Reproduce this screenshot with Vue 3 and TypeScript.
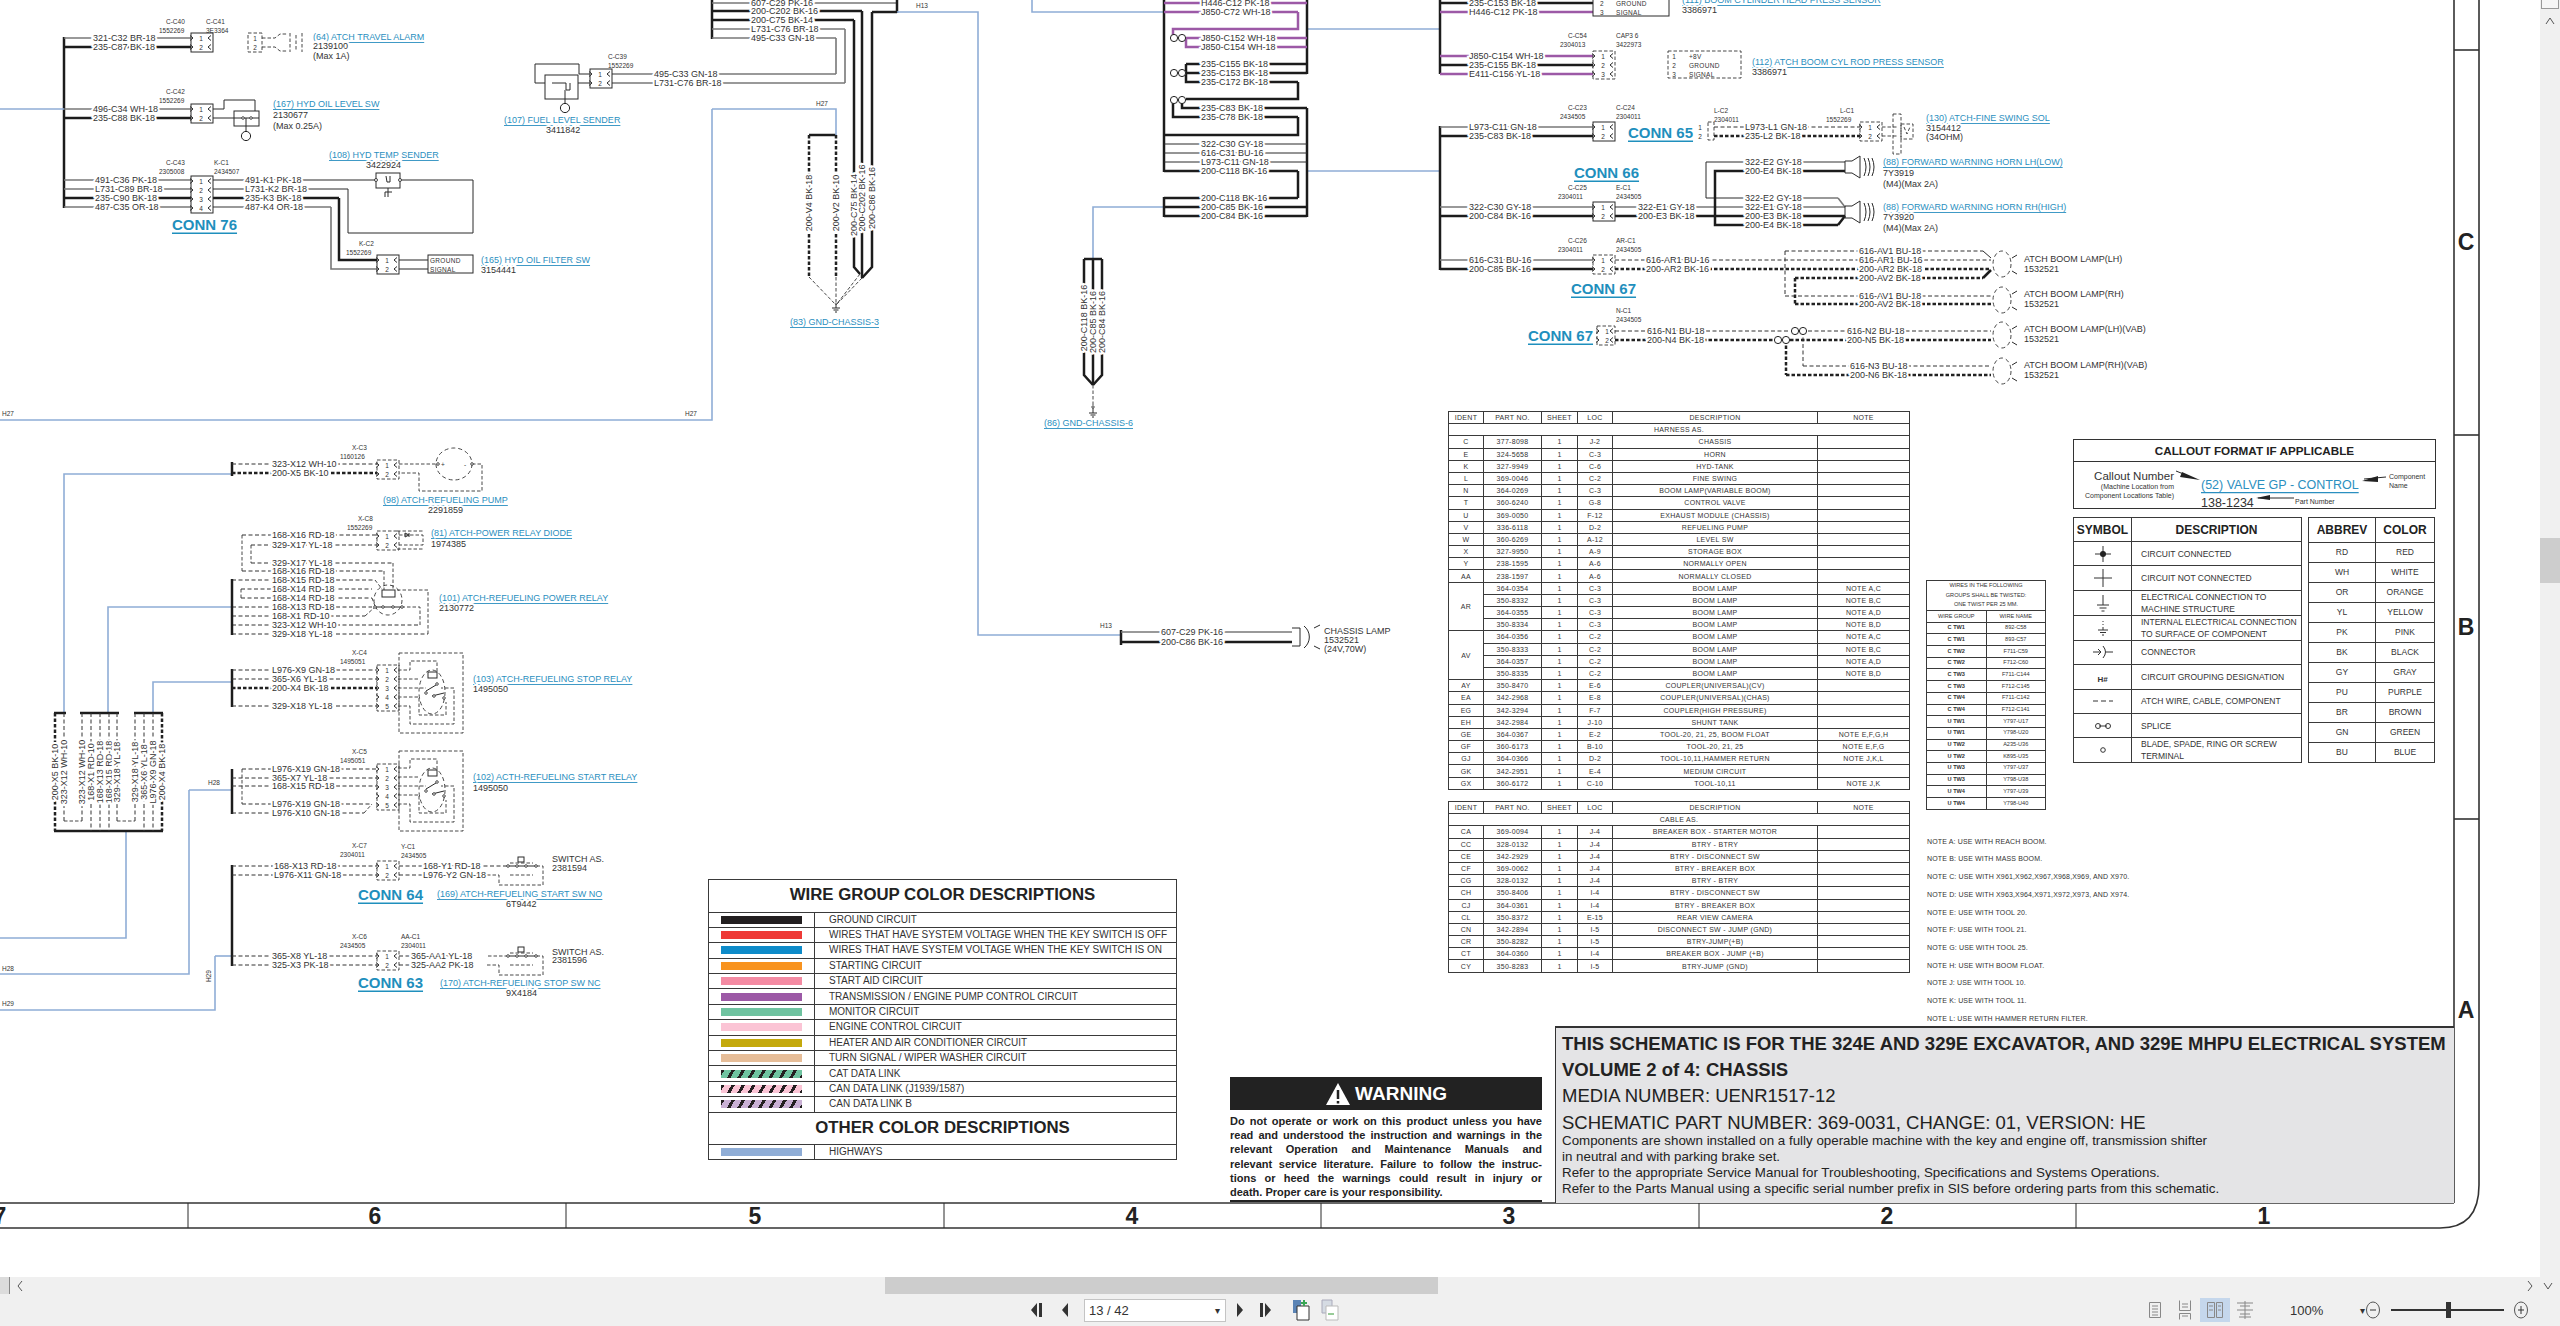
<script setup lang="ts">
// schematic sheet: wires, connectors and labels are plain data drawn into one svg
interface Txt { x: number; y: number; s: string; c: string; a: string; r: boolean }
const segs: { d: string; c: string }[] = [];
const boxes: { x: number; y: number; w: number; h: number; c: string }[] = [];
const rings: { x: number; y: number; rx: number; ry: number; c: string }[] = [];
const texts: Txt[] = [];

const P = (c: string, ...n: number[]) => {
	let d = "";
	for (let i = 0; i < n.length; i += 2) d += (i ? "L" : "M") + n[i] + " " + n[i + 1];
	segs.push({ d, c });
};
const R = (c: string, d: string) => segs.push({ d, c });
const T = (x: number, y: number, s: string, c = "wl", a = "start", r = false) => texts.push({ x, y, s, c, a, r });
const W = (c: string, y: number, x1: number, x2: number, s: string, lx: number) => {
	P(c, x1, y, x2, y);
	T(lx, y, s);
};
const B = (c: string, x: number, y: number, w: number, h: number) => boxes.push({ x, y, w, h, c });
const O = (c: string, x: number, y: number, rx: number, ry = rx) => rings.push({ x, y, rx, ry, c });
const CL = (xa: number, xb: number, y: number, a: string, b: string) => {
	T(xa, y, a, "sm");
	T(xb, y + 9, b, "sm");
};
const CN = (x: number, y0: number, n: number, dashed = false, w = 22) => {
	B(dashed ? "d" : "t", x, y0, w, 10 + 9 * (n - 1));
	for (let i = 0; i < n; i++) {
		const py = y0 + 5 + 9 * i;
		P("t", x - 1, py - 2.5, x + 2, py, x - 1, py + 2.5);
		P("t", x + w - 2, py - 2.5, x + w - 5, py, x + w - 2, py + 2.5);
		T(x + 10, py, String(i + 1), "pin", "middle");
	}
};
const GND = (x: number, y: number) => {
	P("t", x, y - 5, x, y);
	P("t", x - 4, y, x + 4, y);
	P("t", x - 2.5, y + 2, x + 2.5, y + 2);
	P("t", x - 1, y + 4, x + 1, y + 4);
};
const V = (x: number, y: number, s: string) => T(x, y, s, "wl", "middle", true);

// hyd tank area, top left
P("k", 64, 37, 64, 208);
P("h", 0, 109, 64, 109);
W("g", 38, 64, 191, "321-C32 BR-18", 93);
W("k", 47, 64, 191, "235-C87 BK-18", 93);
CN(191, 33, 2);
CL(166, 159, 21, "C-C40", "1552269");
T(206, 21, "C-C41", "sm");
T(206, 30, "3E3364", "sm");
B("d", 248, 33, 14, 19);
T(255, 38, "1", "pin", "middle");
T(255, 47, "2", "pin", "middle");
P("d", 262, 38, 275, 38, 280, 34, 288, 34);
P("d", 262, 47, 275, 47, 280, 51, 288, 51);
P("d", 290, 33, 290, 52);
P("d", 296, 35, 296, 50);
P("d", 302, 33, 302, 52);
T(313, 37, "(64) ATCH TRAVEL ALARM", "lk");
T(313, 46, "2139100");
T(313, 56, "(Max 1A)");

W("g", 109, 64, 191, "496-C34 WH-18", 93);
W("k", 118, 64, 191, "235-C88 BK-18", 93);
CN(191, 104, 2);
CL(166, 159, 91, "C-C42", "1552269");
P("t", 213, 109, 224, 109, 224, 100, 255, 100, 255, 111);
P("t", 213, 118, 234, 118);
B("t", 234, 111, 25, 15);
P("t", 234, 118, 259, 118);
P("t", 246, 118, 246, 131);
O("sw", 243, 118, 1.3);
O("sw", 251, 118, 1.3);
O("ring", 246, 136, 4.6);
T(273, 104, "(167) HYD OIL LEVEL SW", "lk");
T(273, 115, "2130677");
T(273, 126, "(Max 0.25A)");

W("g", 180, 64, 191, "491-C36 PK-18", 95);
W("g", 189, 64, 191, "L731-C89 BR-18", 95);
W("k", 198, 64, 191, "235-C90 BK-18", 95);
W("g", 207, 64, 191, "487-C35 OR-18", 95);
CN(191, 176, 4);
CL(166, 159, 162, "C-C43", "2305008");
CL(214, 214, 162, "K-C1", "2434507");
T(172, 224, "CONN 76", "cn");
W("t", 180, 213, 376, "491-K1 PK-18", 245);
P("t", 400, 180, 473, 180, 473, 233, 348, 233, 348, 189);
W("t", 189, 213, 348, "L731-K2 BR-18", 245);
W("k", 198, 213, 339, "235-K3 BK-18", 245);
P("k", 339, 198, 339, 260, 377, 260);
W("g", 207, 213, 331, "487-K4 OR-18", 245);
P("g", 331, 207, 331, 269, 377, 269);
B("t", 376, 173, 24, 15);
O("sw", 376, 180, 1.5);
O("sw", 400, 180, 1.5);
P("t", 386, 176, 387, 182, 390, 182, 390, 176);
P("t", 388, 188, 388, 197);
P("t", 385, 197, 385, 192, 392, 192);
T(329, 155, "(108) HYD TEMP SENDER", "lk");
T(366, 165, "3422924");
CN(377, 255, 2);
CL(359, 346, 243, "K-C2", "1552269");
P("g", 399, 260, 428, 260);
P("g", 399, 269, 428, 269);
B("t", 428, 255, 45, 18);
T(430, 260, "GROUND", "pn");
T(430, 269, "SIGNAL", "pn");
T(481, 260, "(165) HYD OIL FILTER SW", "lk");
T(481, 270, "3154441");

// fuel sender
CN(590, 69, 2);
CL(608, 608, 56, "C-C39", "1552269");
P("t", 590, 74, 579, 74, 579, 64, 535, 64, 535, 83, 545, 83);
P("t", 590, 83, 578, 83);
B("t", 545, 75, 33, 24);
P("t", 552, 83, 566, 83, 566, 90, 570, 90, 570, 83);
P("t", 565, 90, 565, 103);
O("ring", 565, 108, 4.6);
T(504, 120, "(107) FUEL LEVEL SENDER", "lk");
T(546, 130, "3411842");
W("g", 74, 612, 836, "495-C33 GN-18", 654);
W("g", 83, 612, 845, "L731-C76 BR-18", 654);
P("g", 836, 74, 836, 38);
P("g", 845, 83, 845, 29);

// top splice to chassis ground
P("k", 712, 0, 712, 39);
W("g", 3, 712, 897, "607-C29 PK-16", 751);
W("k", 11, 712, 862, "200-C202 BK-16", 751);
W("k", 20, 712, 854, "200-C75 BK-14", 751);
W("g", 29, 712, 845, "L731-C76 BR-18", 751);
W("g", 38, 712, 836, "495-C33 GN-18", 751);
P("k", 897, 0, 897, 13);
P("k", 872, 12, 897, 12);
P("k", 862, 11, 862, 278);
P("k", 872, 12, 872, 267, 862, 278);
P("k", 854, 20, 854, 267, 860, 274);
P("k", 809, 135, 836, 135);
P("kd", 809, 135, 809, 277);
P("kd", 836, 135, 836, 277);
P("d", 809, 277, 836, 305);
P("d", 836, 277, 836, 305);
P("d", 860, 274, 836, 305);
P("d", 862, 278, 836, 305);
GND(836, 308);
V(809, 203, "200-V4 BK-18");
V(836, 203, "200-V2 BK-10");
V(854, 205, "200-C75 BK-14");
V(862, 198, "200-C202 BK-16");
V(872, 198, "200-C86 BK-16");
T(790, 322, "(83) GND-CHASSIS-3", "lk");

// highways
P("h", 712, 109, 836, 109, 836, 135);
P("h", 712, 109, 712, 420, 0, 420);
T(816, 103, "H27", "sm");
T(685, 413, "H27", "sm");
T(2, 413, "H27", "sm");
P("h", 897, 12, 978, 12, 978, 635, 1120, 635);
T(916, 5, "H13", "sm");
T(1100, 625, "H13", "sm");
P("h", 1032, 0, 1032, 12, 1164, 12);
P("h", 1307, 29, 1439, 29);
P("h", 1307, 171, 1439, 171);
P("h", 1164, 207, 1093, 207, 1093, 259);

// chassis lamp
P("k", 1121, 630, 1121, 645);
W("g", 632, 1121, 1292, "607-C29 PK-16", 1161);
W("k", 642, 1121, 1292, "200-C86 BK-16", 1161);
P("t", 1292, 628, 1300, 628, 1300, 646, 1292, 646);
R("t", "M1304 626 A14 14 0 0 1 1304 648");
P("t", 1314, 628, 1320, 625);
P("t", 1314, 646, 1320, 649);
T(1324, 631, "CHASSIS LAMP");
T(1324, 640, "1532521");
T(1324, 649, "(24V,70W)");

// center bundle
P("k", 1164, 0, 1164, 172);
P("k", 1164, 197, 1164, 217);
P("k", 1307, 0, 1307, 74);
P("k", 1307, 108, 1307, 217);
W("p", 3, 1164, 1307, "H446-C12 PK-18", 1201);
W("p", 12, 1164, 1298, "J850-C72 WH-18", 1201);
P("p", 1298, 12, 1298, 29, 1173, 29, 1173, 38);
W("p", 38, 1186, 1307, "J850-C152 WH-18", 1201);
P("p", 1186, 38, 1186, 47, 1192, 47);
W("p", 47, 1192, 1307, "J850-C154 WH-18", 1201);
W("k", 64, 1186, 1307, "235-C155 BK-18", 1201);
W("k", 73, 1186, 1307, "235-C153 BK-18", 1201);
P("k", 1186, 64, 1186, 82, 1192, 82);
W("k", 82, 1192, 1298, "235-C172 BK-18", 1201);
P("k", 1298, 82, 1298, 99, 1186, 99);
P("k", 1182, 100, 1182, 108, 1192, 108);
P("k", 1173, 100, 1173, 117, 1192, 117);
W("k", 108, 1192, 1307, "235-C83 BK-18", 1201);
W("k", 117, 1192, 1298, "235-C78 BK-18", 1201);
P("k", 1298, 117, 1298, 135, 1164, 135);
W("t", 144, 1164, 1307, "322-C30 GY-18", 1201);
W("t", 153, 1164, 1307, "616-C31 BU-16", 1201);
W("t", 162, 1164, 1307, "L973-C11 GN-18", 1201);
W("k", 171, 1164, 1298, "200-C118 BK-16", 1201);
P("k", 1298, 171, 1298, 198);
W("k", 198, 1164, 1298, "200-C118 BK-16", 1201);
W("k", 207, 1164, 1307, "200-C85 BK-16", 1201);
W("k", 216, 1164, 1307, "200-C84 BK-16", 1201);
O("ring", 1174, 38, 3.6);
O("ring", 1182, 38, 3.6);
O("ring", 1174, 73, 3.6);
O("ring", 1182, 73, 3.6);
O("ring", 1174, 100, 3.6);
O("ring", 1182, 100, 3.6);

// lower ground bundle
P("k", 1084, 259, 1102, 259);
P("k", 1084, 259, 1084, 375, 1093, 385);
P("k", 1093, 259, 1093, 385);
P("k", 1102, 259, 1102, 375, 1093, 385);
P("d", 1093, 385, 1093, 408);
O("sw", 1093, 407, 1.2);
GND(1093, 413);
V(1084, 318, "200-C118 BK-16");
V(1093, 322, "200-C85 BK-16");
V(1102, 322, "200-C84 BK-16");
T(1044, 423, "(86) GND-CHASSIS-6", "lk");

// right group
P("k", 1440, 0, 1440, 74);
P("k", 1440, 126, 1440, 270);
W("k", 3, 1440, 1593, "235-C153 BK-18", 1469);
W("p", 12, 1440, 1593, "H446-C12 PK-18", 1469);
B("t", 1593, -20, 76, 36);
T(1616, 3, "GROUND", "pn");
T(1616, 12, "SIGNAL", "pn");
T(1600, 3, "2", "pin");
T(1600, 12, "3", "pin");
T(1682, 0, "(111) BOOM CYLINDER HEAD PRESS SENSOR", "lk");
T(1682, 10, "3386971");
W("p", 56, 1440, 1593, "J850-C154 WH-18", 1469);
W("k", 65, 1440, 1593, "235-C155 BK-18", 1469);
W("p", 74, 1440, 1593, "E411-C156 YL-18", 1469);
CN(1593, 51, 3, true);
CL(1568, 1560, 35, "C-C54", "2304013");
CL(1616, 1616, 35, "CAP3 6", "3422973");
B("d", 1668, 51, 73, 27);
["1", "2", "3"].forEach((n, i) => T(1674, 56 + 9 * i, n, "pin", "middle"));
T(1689, 56, "+8V", "pn");
T(1689, 65, "GROUND", "pn");
T(1689, 74, "SIGNAL", "pn");
T(1752, 62, "(112) ATCH BOOM CYL ROD PRESS SENSOR", "lk");
T(1752, 72, "3386971");

W("g", 127, 1440, 1593, "L973-C11 GN-18", 1469);
W("k", 136, 1440, 1593, "235-C83 BK-18", 1469);
CN(1593, 122, 2);
CL(1568, 1560, 107, "C-C23", "2434505");
CL(1616, 1616, 107, "C-C24", "2304011");
T(1628, 132, "CONN 65", "cn");
T(1700, 127, "1", "pin", "middle");
T(1700, 136, "2", "pin", "middle");
B("d", 1708, 122, 6, 18);
CL(1714, 1714, 110, "L-C2", "2304011");
W("gd", 127, 1714, 1860, "L973-L1 GN-18", 1745);
W("kd", 136, 1714, 1860, "235-L2 BK-18", 1745);
CN(1860, 122, 2, true);
CL(1840, 1826, 110, "L-C1", "1552269");
P("d", 1882, 127, 1897, 127);
P("d", 1882, 136, 1897, 136);
B("d", 1893, 114, 8, 40);
B("d", 1901, 124, 12, 15);
P("d", 1904, 127, 1907, 134, 1910, 127);
T(1926, 118, "(130) ATCH-FINE SWING SOL", "lk");
T(1926, 128, "3154412");
T(1926, 137, "(34OHM)");

T(1574, 172, "CONN 66", "cn");
W("g", 207, 1440, 1593, "322-C30 GY-18", 1469);
W("k", 216, 1440, 1593, "200-C84 BK-16", 1469);
CN(1593, 202, 2);
CL(1568, 1558, 187, "C-C25", "2304011");
CL(1616, 1616, 187, "E-C1", "2434505");
W("g", 207, 1615, 1745, "322-E1 GY-18", 1638);
W("k", 216, 1615, 1745, "200-E3 BK-18", 1638);
P("t", 1745, 162, 1706, 162, 1706, 198, 1745, 198);
P("k", 1745, 171, 1715, 171, 1715, 225, 1745, 225);
W("g", 162, 1745, 1845, "322-E2 GY-18", 1745);
W("k", 171, 1745, 1845, "200-E4 BK-18", 1745);
W("g", 198, 1745, 1838, "322-E2 GY-18", 1745);
P("g", 1838, 198, 1845, 207);
W("g", 207, 1745, 1845, "322-E1 GY-18", 1745);
W("k", 216, 1745, 1845, "200-E3 BK-18", 1745);
W("k", 225, 1745, 1838, "200-E4 BK-18", 1745);
P("k", 1838, 225, 1845, 216);
for (const y of [167, 212]) {
	P("t", 1845, y - 6, 1852, y - 6, 1860, y - 11, 1860, y + 11, 1852, y + 6, 1845, y + 6, 1845, y - 6);
	R("t", `M1864 ${y - 9} Q1868 ${y} 1864 ${y + 9}`);
	R("t", `M1868 ${y - 9} Q1872 ${y} 1868 ${y + 9}`);
	R("t", `M1872 ${y - 9} Q1876 ${y} 1872 ${y + 9}`);
}
T(1883, 162, "(88) FORWARD WARNING HORN LH(LOW)", "lk");
T(1883, 173, "7Y3919");
T(1883, 184, "(M4)(Max 2A)");
T(1883, 207, "(88) FORWARD WARNING HORN RH(HIGH)", "lk");
T(1883, 217, "7Y3920");
T(1883, 228, "(M4)(Max 2A)");

W("g", 260, 1440, 1593, "616-C31 BU-16", 1469);
W("k", 269, 1440, 1593, "200-C85 BK-16", 1469);
CN(1593, 255, 2, true);
CL(1568, 1558, 240, "C-C26", "2304011");
CL(1616, 1616, 240, "AR-C1", "2434505");
T(1571, 288, "CONN 67", "cn");
W("gd", 260, 1615, 1859, "616-AR1 BU-16", 1646);
W("kd", 269, 1615, 1859, "200-AR2 BK-16", 1646);
W("gd", 251, 1785, 1983, "616-AV1 BU-18", 1859);
W("gd", 260, 1859, 1991, "616-AR1 BU-16", 1859);
W("kd", 269, 1859, 1991, "200-AR2 BK-18", 1859);
W("kd", 278, 1795, 1983, "200-AV2 BK-18", 1859);
W("gd", 296, 1785, 1991, "616-AV1 BU-18", 1859);
W("kd", 304, 1795, 1991, "200-AV2 BK-18", 1859);
P("gd", 1785, 251, 1785, 296);
P("kd", 1795, 278, 1795, 304);
P("t", 1983, 251, 1991, 258);
P("k", 1983, 278, 1991, 270);

T(1528, 335, "CONN 67", "cn");
CL(1616, 1616, 310, "N-C1", "2434505");
CN(1597, 326, 2, true, 18);
W("gd", 331, 1615, 1790, "616-N1 BU-18", 1647);
W("kd", 340, 1615, 1774, "200-N4 BK-18", 1647);
W("gd", 331, 1808, 1991, "616-N2 BU-18", 1847);
W("kd", 340, 1790, 1991, "200-N5 BK-18", 1847);
W("gd", 366, 1803, 1991, "616-N3 BU-18", 1850);
W("kd", 375, 1786, 1991, "200-N6 BK-18", 1850);
P("gd", 1803, 331, 1803, 366);
P("kd", 1786, 340, 1786, 375);
O("ring", 1795, 331, 3.6);
O("ring", 1803, 331, 3.6);
O("ring", 1778, 340, 3.6);
O("ring", 1786, 340, 3.6);
for (const y of [264, 300, 335, 371]) {
	O("de", 2002, y, 9, 13);
	P("t", 2012, y - 6, 2017, y - 9);
	P("t", 2012, y + 7, 2017, y + 10);
}
[
	[259, "ATCH BOOM LAMP(LH)"],
	[294, "ATCH BOOM LAMP(RH)"],
	[329, "ATCH BOOM LAMP(LH)(VAB)"],
	[365, "ATCH BOOM LAMP(RH)(VAB)"],
].forEach(([y, s]) => {
	T(2024, y as number, s as string);
	T(2024, (y as number) + 10, "1532521");
});

// refueling, lower left
P("h", 64, 712, 64, 474, 232, 474);
P("h", 108, 712, 108, 607, 232, 607);
P("h", 153, 712, 153, 682, 232, 682);
P("h", 189, 790, 232, 790);
P("h", 189, 790, 189, 974, 0, 974);
P("h", 126, 831, 126, 938, 0, 938);
P("h", 215, 956, 232, 956);
P("h", 215, 956, 215, 1010, 0, 1010);
T(208, 782, "H28", "sm");
T(2, 968, "H28", "sm");
T(2, 1003, "H29", "sm");
T(208, 976, "H29", "sm", "middle", true);

P("k", 232, 462, 232, 476);
W("gd", 464, 232, 377, "323-X12 WH-10", 272);
W("kd", 473, 232, 377, "200-X5 BK-10", 272);
CN(377, 460, 2, true);
CL(352, 340, 447, "X-C3", "1160126");
P("d", 399, 464, 437, 464);
P("d", 472, 464, 482, 464, 482, 491, 419, 491, 419, 473, 399, 473);
O("de", 454, 464, 18, 16);
O("sw", 438, 464, 1.3);
O("sw", 472, 464, 1.3);
T(443, 464, "+", "pin", "middle");
T(465, 464, "-", "pin", "middle");
T(383, 500, "(98) ATCH-REFUELING PUMP", "lk");
T(428, 510, "2291859");

CL(358, 347, 518, "X-C8", "1552269");
W("gd", 535, 242, 377, "168-X16 RD-18", 272);
W("gd", 545, 251, 377, "329-X17 YL-18", 272);
CN(377, 531, 2, true);
P("d", 399, 535, 423, 535, 423, 545, 399, 545);
P("d", 397, 531, 423, 531);
P("d", 397, 549, 423, 549);
P("t", 405, 533, 405, 537, 409, 535, 405, 533);
P("t", 409, 533, 409, 537);
T(431, 533, "(81) ATCH-POWER RELAY DIODE", "lk");
T(431, 544, "1974385");
P("d", 242, 535, 242, 571);
P("d", 251, 545, 251, 563);
W("gd", 563, 251, 393, "329-X17 YL-18", 272);
W("gd", 571, 242, 384, "168-X16 RD-18", 272);
W("gd", 580, 232, 375, "168-X15 RD-18", 272);
W("gd", 589, 241, 372, "168-X14 RD-18", 272);
W("gd", 598, 241, 372, "168-X14 RD-18", 272);
W("gd", 607, 232, 372, "168-X13 RD-18", 272);
W("gd", 616, 232, 365, "168-X1 RD-10", 272);
W("gd", 625, 232, 420, "323-X12 WH-10", 272);
W("gd", 634, 232, 428, "329-X18 YL-18", 272);
P("k", 232, 579, 232, 635);
P("d", 241, 589, 241, 598);
P("d", 393, 563, 393, 590);
P("d", 384, 571, 384, 590);
P("d", 375, 580, 382, 589);
P("d", 372, 598, 375, 606);
P("d", 365, 616, 375, 607);
P("d", 420, 625, 420, 607, 402, 607);
P("d", 428, 634, 428, 590, 397, 590);
B("t", 382, 590, 13, 7);
O("de", 388, 600, 14, 15);
P("t", 375, 607, 402, 607);
for (const x of [375, 383, 393, 402]) O("sw", x, 607, 1.3);
T(439, 598, "(101) ATCH-REFUELING POWER RELAY", "lk");
T(439, 608, "2130772");

const relay = (dy: number) => {
	B("d", 399, 653 + dy, 64, 80);
	P("d", 398, 670 + dy, 410, 670 + dy, 410, 661 + dy, 437, 661 + dy, 437, 672 + dy);
	P("d", 398, 679 + dy, 420, 679 + dy);
	P("d", 398, 688 + dy, 426, 688 + dy);
	P("d", 398, 697 + dy, 419, 697 + dy, 419, 715 + dy, 446, 715 + dy, 446, 702 + dy);
	P("d", 398, 706 + dy, 410, 706 + dy, 410, 724 + dy, 454, 724 + dy, 454, 688 + dy, 441, 688 + dy);
	O("de", 432, 692 + dy, 13, 22);
	B("t", 428, 672 + dy, 9, 6);
	P("t", 426, 691 + dy, 436, 685 + dy);
	P("t", 432, 696 + dy, 444, 693 + dy);
	O("sw", 426, 693 + dy, 1.3);
	O("sw", 437, 684 + dy, 1.3);
	O("sw", 434, 696 + dy, 1.3);
	O("sw", 444, 698 + dy, 1.3);
};
P("k", 232, 669, 232, 707);
W("gd", 670, 232, 377, "L976-X9 GN-18", 272);
W("gd", 679, 232, 377, "365-X6 YL-18", 272);
W("kd", 688, 232, 377, "200-X4 BK-18", 272);
W("gd", 706, 232, 377, "329-X18 YL-18", 272);
CN(377, 665, 5, true);
CL(352, 340, 652, "X-C4", "1495051");
relay(0);
T(473, 679, "(103) ATCH-REFUELING STOP RELAY", "lk");
T(473, 689, "1495050");

P("k", 232, 769, 232, 814);
W("gd", 769, 242, 377, "L976-X19 GN-18", 272);
W("gd", 778, 232, 377, "365-X7 YL-18", 272);
W("gd", 786, 232, 377, "168-X15 RD-18", 272);
W("gd", 804, 242, 372, "L976-X19 GN-18", 272);
W("gd", 813, 232, 364, "L976-X10 GN-18", 272);
P("d", 364, 813, 372, 804);
P("d", 242, 769, 242, 804);
CN(377, 764, 5, true);
CL(352, 340, 751, "X-C5", "1495051");
relay(98);
T(473, 777, "(102) ACTH-REFUELING START RELAY", "lk");
T(473, 788, "1495050");

const sw = (dy: number) => {
	P("t", 508, 866 + dy, 536, 866 + dy);
	for (const x of [508, 517, 526, 536]) O("sw", x, 866 + dy, 1.3);
	B("t", 518, 857 + dy, 6, 5);
	P("d", 510, 863 + dy, 533, 863 + dy);
	P("d", 510, 875 + dy, 533, 875 + dy);
	P("d", 487, 875 + dy, 499, 875 + dy, 499, 885 + dy, 543, 885 + dy, 543, 866 + dy, 536, 866 + dy);
};
P("k", 232, 865, 232, 966);
W("gd", 866, 232, 377, "168-X13 RD-18", 274);
W("gd", 875, 232, 377, "L976-X11 GN-18", 274);
CN(377, 861, 2, true);
CL(352, 340, 845, "X-C7", "2304011");
CL(401, 401, 846, "Y-C1", "2434505");
W("gd", 866, 399, 508, "168-Y1 RD-18", 423);
W("gd", 875, 399, 487, "L976-Y2 GN-18", 423);
sw(0);
T(552, 859, "SWITCH AS.");
T(552, 868, "2381594");
T(358, 894, "CONN 64", "cn");
T(437, 894, "(169) ATCH-REFUELING START SW NO", "lk");
T(506, 904, "6T9442");

W("gd", 956, 232, 377, "365-X8 YL-18", 272);
W("gd", 965, 232, 377, "325-X3 PK-18", 272);
CN(377, 951, 2, true);
CL(352, 340, 936, "X-C6", "2434505");
CL(401, 401, 936, "AA-C1", "2304011");
W("gd", 956, 399, 470, "365-AA1 YL-18", 411);
W("gd", 965, 399, 470, "325-AA2 PK-18", 411);
P("d", 488, 956, 508, 956);
sw(90);
T(552, 952, "SWITCH AS.");
T(552, 960, "2381596");
T(358, 982, "CONN 63", "cn");
T(440, 983, "(170) ATCH-REFUELING STOP SW NC", "lk");
T(506, 993, "9X4184");

// twisted bundle
P("k", 54, 713, 66, 713);
P("k", 80, 713, 119, 713);
P("k", 134, 713, 163, 713);
P("k", 54, 831, 163, 831);
[
	[55, "200-X5 BK-10", "kd", 831],
	[64, "323-X12 WH-10", "gd", 821],
	[82, "323-X12 WH-10", "gd", 821],
	[91, "168-X1 RD-10", "gd", 831],
	[100, "168-X13 RD-18", "gd", 831],
	[109, "168-X15 RD-18", "gd", 831],
	[117, "329-X18 YL-18", "gd", 821],
	[135, "329-X18 YL-18", "gd", 821],
	[144, "365-X6 YL-18", "gd", 831],
	[153, "L976-X9 GN-18", "gd", 831],
	[162, "200-X4 BK-18", "kd", 831],
].forEach(([x, s, c, e]) => {
	P(c as string, x as number, 713, x as number, e as number);
	V(x as number, 772, s as string);
});
P("d", 64, 821, 82, 821);
P("d", 117, 821, 135, 821);

// sheet frame and zones
P("f", 0, 1203, 2454, 1203);
R("f", "M0 1228 L2440 1228 Q2479 1228 2479 1185 L2479 0");
P("f", 2454, 0, 2454, 1203);
for (const y of [50, 435, 819]) P("f", 2454, y, 2479, y);
for (const x of [188, 566, 944, 1321, 1699, 2076]) P("t", x, 1203, x, 1228);
[["7", 0], ["6", 375], ["5", 755], ["4", 1132], ["3", 1509], ["2", 1887], ["1", 2264]].forEach(([s, x]) =>
	T(x as number, 1216, s as string, "zone", "middle"),
);
T(2466, 242, "C", "zone", "middle");
T(2466, 627, "B", "zone", "middle");
T(2466, 1010, "A", "zone", "middle");

// notes
[
	[841, "NOTE A: USE WITH REACH BOOM."],
	[858, "NOTE B: USE WITH MASS BOOM."],
	[876, "NOTE C: USE WITH X961,X962,X967,X968,X969, AND X970."],
	[894, "NOTE D: USE WITH X963,X964,X971,X972,X973, AND X974."],
	[912, "NOTE E: USE WITH TOOL 20."],
	[929, "NOTE F: USE WITH TOOL 21."],
	[947, "NOTE G: USE WITH TOOL 25."],
	[965, "NOTE H: USE WITH BOOM FLOAT."],
	[982, "NOTE J: USE WITH TOOL 10."],
	[1000, "NOTE K: USE WITH TOOL 11."],
	[1018, "NOTE L: USE WITH HAMMER RETURN FILTER."],
].forEach(([y, s]) => T(1927, y as number, s as string, "nt"));

type Row = { id?: string; span?: number; part: string; loc: string; desc: string; note?: string };
const harness: Row[] = [
	{ id: "C", part: "377-8098", loc: "J-2", desc: "CHASSIS" },
	{ id: "E", part: "324-5658", loc: "C-3", desc: "HORN" },
	{ id: "K", part: "327-9949", loc: "C-6", desc: "HYD-TANK" },
	{ id: "L", part: "369-0046", loc: "C-2", desc: "FINE SWING" },
	{ id: "N", part: "364-0269", loc: "C-3", desc: "BOOM LAMP(VARIABLE BOOM)" },
	{ id: "T", part: "360-6240", loc: "G-8", desc: "CONTROL VALVE" },
	{ id: "U", part: "369-0050", loc: "F-12", desc: "EXHAUST MODULE (CHASSIS)" },
	{ id: "V", part: "336-6118", loc: "D-2", desc: "REFUELING PUMP" },
	{ id: "W", part: "360-6269", loc: "A-12", desc: "LEVEL SW" },
	{ id: "X", part: "327-9950", loc: "A-9", desc: "STORAGE BOX" },
	{ id: "Y", part: "238-1595", loc: "A-6", desc: "NORMALLY OPEN" },
	{ id: "AA", part: "238-1597", loc: "A-6", desc: "NORMALLY CLOSED" },
	{ id: "AR", span: 4, part: "364-0354", loc: "C-3", desc: "BOOM LAMP", note: "NOTE A,C" },
	{ part: "350-8332", loc: "C-3", desc: "BOOM LAMP", note: "NOTE B,C" },
	{ part: "364-0355", loc: "C-3", desc: "BOOM LAMP", note: "NOTE A,D" },
	{ part: "350-8334", loc: "C-3", desc: "BOOM LAMP", note: "NOTE B,D" },
	{ id: "AV", span: 4, part: "364-0356", loc: "C-2", desc: "BOOM LAMP", note: "NOTE A,C" },
	{ part: "350-8333", loc: "C-2", desc: "BOOM LAMP", note: "NOTE B,C" },
	{ part: "364-0357", loc: "C-2", desc: "BOOM LAMP", note: "NOTE A,D" },
	{ part: "350-8335", loc: "C-2", desc: "BOOM LAMP", note: "NOTE B,D" },
	{ id: "AY", part: "350-8470", loc: "E-6", desc: "COUPLER(UNIVERSAL)(CV)" },
	{ id: "EA", part: "342-2968", loc: "E-8", desc: "COUPLER(UNIVERSAL)(CHAS)" },
	{ id: "EG", part: "342-3294", loc: "F-7", desc: "COUPLER(HIGH PRESSURE)" },
	{ id: "EH", part: "342-2984", loc: "J-10", desc: "SHUNT TANK" },
	{ id: "GE", part: "364-0367", loc: "E-2", desc: "TOOL-20, 21, 25, BOOM FLOAT", note: "NOTE E,F,G,H" },
	{ id: "GF", part: "360-6173", loc: "B-10", desc: "TOOL-20, 21, 25", note: "NOTE E,F,G" },
	{ id: "GJ", part: "364-0366", loc: "D-2", desc: "TOOL-10,11,HAMMER RETURN", note: "NOTE J,K,L" },
	{ id: "GK", part: "342-2951", loc: "E-4", desc: "MEDIUM CIRCUIT" },
	{ id: "GX", part: "360-6172", loc: "C-10", desc: "TOOL-10,11", note: "NOTE J,K" },
];
const cable: Row[] = [
	{ id: "CA", part: "369-0094", loc: "J-4", desc: "BREAKER BOX - STARTER MOTOR" },
	{ id: "CC", part: "328-0132", loc: "J-4", desc: "BTRY - BTRY" },
	{ id: "CE", part: "342-2929", loc: "J-4", desc: "BTRY - DISCONNECT SW" },
	{ id: "CF", part: "369-0062", loc: "J-4", desc: "BTRY - BREAKER BOX" },
	{ id: "CG", part: "328-0132", loc: "J-4", desc: "BTRY - BTRY" },
	{ id: "CH", part: "350-8406", loc: "I-4", desc: "BTRY - DISCONNECT SW" },
	{ id: "CJ", part: "364-0361", loc: "I-4", desc: "BTRY - BREAKER BOX" },
	{ id: "CL", part: "350-8372", loc: "E-15", desc: "REAR VIEW CAMERA" },
	{ id: "CN", part: "342-2894", loc: "I-5", desc: "DISCONNECT SW - JUMP (GND)" },
	{ id: "CR", part: "350-8282", loc: "I-5", desc: "BTRY-JUMP(+B)" },
	{ id: "CT", part: "364-0360", loc: "I-4", desc: "BREAKER BOX - JUMP (+B)" },
	{ id: "CY", part: "350-8283", loc: "I-5", desc: "BTRY-JUMP (GND)" },
];
const partTables = [
	{ cls: "p-harness", title: "HARNESS AS.", rows: harness },
	{ cls: "p-cable", title: "CABLE AS.", rows: cable },
];
const twists = [
	["C TW1", "892-C58"], ["C TW1", "893-C57"], ["C TW2", "F711-C59"], ["C TW2", "F712-C60"],
	["C TW3", "F711-C144"], ["C TW3", "F712-C145"], ["C TW4", "F711-C142"], ["C TW4", "F712-C141"],
	["U TW1", "Y797-U17"], ["U TW1", "Y798-U20"], ["U TW2", "A235-U36"], ["U TW2", "K895-U35"],
	["U TW3", "Y797-U37"], ["U TW3", "Y798-U38"], ["U TW4", "Y797-U39"], ["U TW4", "Y798-U40"],
];
const wireGroups = [
	{ s: "sw-a", t: "GROUND CIRCUIT" },
	{ s: "sw-b", t: "WIRES THAT HAVE SYSTEM VOLTAGE WHEN THE KEY SWITCH IS OFF" },
	{ s: "sw-c", t: "WIRES THAT HAVE SYSTEM VOLTAGE WHEN THE KEY SWITCH IS ON" },
	{ s: "sw-d", t: "STARTING CIRCUIT" },
	{ s: "sw-e", t: "START AID CIRCUIT" },
	{ s: "sw-f", t: "TRANSMISSION / ENGINE PUMP CONTROL CIRCUIT" },
	{ s: "sw-g", t: "MONITOR CIRCUIT" },
	{ s: "sw-h", t: "ENGINE CONTROL CIRCUIT" },
	{ s: "sw-i", t: "HEATER AND AIR CONDITIONER CIRCUIT" },
	{ s: "sw-j", t: "TURN SIGNAL / WIPER WASHER CIRCUIT" },
	{ s: "sw-k", t: "CAT DATA LINK" },
	{ s: "sw-l", t: "CAN DATA LINK (J1939/1587)" },
	{ s: "sw-m", t: "CAN DATA LINK B" },
];
const symbols = [
	{ d: "M10 2V18M2 10H18", dot: true, t: ["CIRCUIT CONNECTED"] },
	{ d: "M10 1V19M1 10H19", t: ["CIRCUIT NOT CONNECTED"] },
	{ d: "M10 2V12M4 12H16M6.5 15H13.5M8.5 18H11.5", t: ["ELECTRICAL CONNECTION TO", "MACHINE STRUCTURE"] },
	{ d: "M10 3V4M10 6V7M10 9V12M5 12H15M7 14.5H13M9 17H11", t: ["INTERNAL ELECTRICAL CONNECTION", "TO SURFACE OF COMPONENT"] },
	{ d: "M0 10H8M5 7L8 10L5 13M10 4Q15 10 10 16M13 10H20", t: ["CONNECTOR"] },
	{ lbl: "H#", t: ["CIRCUIT GROUPING DESIGNATION"] },
	{ d: "M0 10H5M8 10H13M16 10H20", t: ["ATCH WIRE, CABLE, COMPONENT"] },
	{ d: "M6 10H14M5 10m-2.5 0a2.5 2.5 0 1 0 5 0a2.5 2.5 0 1 0 -5 0M15 10m-2.5 0a2.5 2.5 0 1 0 5 0a2.5 2.5 0 1 0 -5 0", t: ["SPLICE"] },
	{ d: "M10 10m-2.3 0a2.3 2.3 0 1 0 4.6 0a2.3 2.3 0 1 0 -4.6 0", t: ["BLADE, SPADE, RING OR SCREW", "TERMINAL"] },
];
const colours = [
	["RD", "RED"], ["WH", "WHITE"], ["OR", "ORANGE"], ["YL", "YELLOW"], ["PK", "PINK"], ["BK", "BLACK"],
	["GY", "GRAY"], ["PU", "PURPLE"], ["BR", "BROWN"], ["GN", "GREEN"], ["BU", "BLUE"],
];
const warningLines = [
	"Do not operate or work on this product unless you have",
	"read and understood the instruction and warnings in the",
	"relevant Operation and Maintenance Manuals and",
	"relevant service literature. Failure to follow the instruc-",
	"tions or heed the warnings could result in injury or",
];
</script>

<template>
	<div class="viewer">
		<div class="viewport">
			<div class="page">
				<svg class="sheet" width="2540" height="1277" viewBox="0 0 2540 1277">
					<path v-for="(s, i) in segs" :key="'s' + i" :d="s.d" :class="s.c" fill="none" />
					<rect v-for="(b, i) in boxes" :key="'b' + i" :x="b.x" :y="b.y" :width="b.w" :height="b.h" :class="b.c" fill="none" />
					<ellipse v-for="(o, i) in rings" :key="'o' + i" :cx="o.x" :cy="o.y" :rx="o.rx" :ry="o.ry" :class="o.c" />
					<text
						v-for="(t, i) in texts"
						:key="'t' + i"
						:x="t.x"
						:y="t.y"
						:class="t.c"
						:text-anchor="t.a"
						:transform="t.r ? `rotate(-90 ${t.x} ${t.y})` : undefined"
					>{{ t.s }}</text>
				</svg>

				<table v-for="tb in partTables" :key="tb.cls" class="parts" :class="tb.cls">
					<colgroup>
						<col class="c1" /><col class="c2" /><col class="c3" /><col class="c4" /><col class="c5" /><col />
					</colgroup>
					<tbody>
						<tr><td>IDENT</td><td>PART NO.</td><td>SHEET</td><td>LOC</td><td>DESCRIPTION</td><td>NOTE</td></tr>
						<tr><td colspan="6">{{ tb.title }}</td></tr>
						<tr v-for="r in tb.rows" :key="r.part + r.desc">
							<td v-if="r.id" :rowspan="r.span || 1">{{ r.id }}</td>
							<td>{{ r.part }}</td>
							<td>1</td>
							<td>{{ r.loc }}</td>
							<td>{{ r.desc }}</td>
							<td>{{ r.note }}</td>
						</tr>
					</tbody>
				</table>

				<table class="twist">
					<tbody>
						<tr class="tw-title">
							<td colspan="2">WIRES IN THE FOLLOWING<br />GROUPS SHALL BE TWISTED:<br />ONE TWIST PER 25 MM.</td>
						</tr>
						<tr><td>WIRE GROUP</td><td>WIRE NAME</td></tr>
						<tr v-for="(r, i) in twists" :key="i"><td class="tw-b">{{ r[0] }}</td><td>{{ r[1] }}</td></tr>
					</tbody>
				</table>

				<table class="legend">
					<colgroup><col class="lg-c1" /><col /></colgroup>
					<tbody>
						<tr class="lg-title"><td colspan="2">WIRE GROUP COLOR DESCRIPTIONS</td></tr>
						<tr v-for="g in wireGroups" :key="g.t">
							<td><div class="swatch" :class="g.s"></div></td>
							<td class="lg-txt">{{ g.t }}</td>
						</tr>
						<tr class="lg-title"><td colspan="2">OTHER COLOR DESCRIPTIONS</td></tr>
						<tr>
							<td><div class="swatch sw-n"></div></td>
							<td class="lg-txt">HIGHWAYS</td>
						</tr>
					</tbody>
				</table>

				<div class="callout">
					<div class="co-title">CALLOUT FORMAT IF APPLICABLE</div>
					<svg class="co-body" width="360" height="47" viewBox="0 0 360 47">
						<text x="100" y="14" class="co-a" text-anchor="end">Callout Number</text>
						<text x="100" y="24" class="co-s" text-anchor="end">(Machine Location from</text>
						<text x="100" y="33" class="co-s" text-anchor="end">Component Locations Table)</text>
						<text x="127" y="23" class="co-link">(52) VALVE GP - CONTROL</text>
						<text x="127" y="41" class="co-num">138-1234</text>
						<text x="315" y="14" class="co-s">Component</text>
						<text x="315" y="23" class="co-s">Name</text>
						<text x="221" y="39" class="co-s">Part Number</text>
						<path d="M102 9L112 13M290 17L312 15M184 36L220 36" class="t" fill="none" />
						<path d="M108 10L126 18L106 15ZM288 19L304 14L304 20ZM182 36L196 33L196 38Z" class="ah" />
					</svg>
				</div>

				<table class="symbols">
					<colgroup><col class="sy-c1" /><col /></colgroup>
					<tbody>
						<tr class="sy-head"><td>SYMBOL</td><td>DESCRIPTION</td></tr>
						<tr v-for="s in symbols" :key="s.t[0]" class="sy-row">
							<td class="sy-icon">
								<b v-if="s.lbl">{{ s.lbl }}</b>
								<svg v-else width="20" height="20" viewBox="0 0 20 20">
									<path :d="s.d" fill="none" stroke="#333" stroke-width="1" />
									<circle v-if="s.dot" cx="10" cy="10" r="3" fill="#222" />
								</svg>
							</td>
							<td class="sy-txt"><div v-for="l in s.t" :key="l">{{ l }}</div></td>
						</tr>
					</tbody>
				</table>

				<table class="abbrev">
					<colgroup><col class="ab-c1" /><col /></colgroup>
					<tbody>
						<tr class="ab-head"><td>ABBREV</td><td>COLOR</td></tr>
						<tr v-for="c in colours" :key="c[0]" class="ab-row"><td>{{ c[0] }}</td><td>{{ c[1] }}</td></tr>
					</tbody>
				</table>

				<div class="warning">
					<div class="wn-head">
						<svg width="26" height="24" viewBox="0 0 26 24">
							<path d="M13 1L25 23H1Z" fill="#fff" />
							<path d="M13 8V17M13 19V21.500" stroke="#222" stroke-width="2.500" />
						</svg>
						<span>WARNING</span>
					</div>
					<div class="wn-body">
						<div v-for="l in warningLines" :key="l" class="wn-just">{{ l }}</div>
						<div>death. Proper care is your responsibility.</div>
					</div>
				</div>

				<div class="title-block">
					<div class="tb-b">THIS SCHEMATIC IS FOR THE 324E AND 329E EXCAVATOR, AND 329E MHPU ELECTRICAL SYSTEM</div>
					<div class="tb-b">VOLUME 2 of 4: CHASSIS</div>
					<div class="tb-r">MEDIA NUMBER: UENR1517-12</div>
					<div class="tb-r">SCHEMATIC PART NUMBER: 369-0031, CHANGE: 01, VERSION: HE</div>
					<div class="tb-s">Components are shown installed on a fully operable machine with the key and engine off, transmission shifter</div>
					<div class="tb-s">in neutral and with parking brake set.</div>
					<div class="tb-s">Refer to the appropriate Service Manual for Troubleshooting, Specifications and Systems Operations.</div>
					<div class="tb-s">Refer to the Parts Manual using a specific serial number prefix in SIS before ordering parts from this schematic.</div>
				</div>
			</div>
			<div class="vbar">
				<div class="v-top"></div>
				<svg class="v-up" width="12" height="8" viewBox="0 0 12 8"><path d="M2 7L6 1L10 7" fill="none" stroke="#555" /></svg>
				<div class="v-thumb"></div>
			</div>
		</div>

		<div class="hbar">
			<div class="h-stub"></div>
			<svg class="h-left" width="8" height="12" viewBox="0 0 8 12"><path d="M6 1L2 6L6 11" fill="none" stroke="#555" /></svg>
			<div class="h-thumb"></div>
			<svg class="h-right" width="8" height="12" viewBox="0 0 8 12"><path d="M2 1L6 6L2 11" fill="none" stroke="#555" /></svg>
			<svg class="h-down" width="12" height="8" viewBox="0 0 12 8"><path d="M2 1L6 7L10 1" fill="none" stroke="#555" /></svg>
		</div>

		<div class="toolbar">
			<svg class="nav-first" width="18" height="16" viewBox="0 0 18 16"><path d="M9 1L3 8L9 15ZM11 1H14V15H11Z" fill="#333" /></svg>
			<svg class="nav-prev" width="12" height="16" viewBox="0 0 12 16"><path d="M9 1L3 8L9 15Z" fill="#333" /></svg>
			<div class="page-box"><span>13 / 42</span><i>▾</i></div>
			<svg class="nav-next" width="12" height="16" viewBox="0 0 12 16"><path d="M3 1L9 8L3 15Z" fill="#333" /></svg>
			<svg class="nav-last" width="18" height="16" viewBox="0 0 18 16"><path d="M4 1H7V15H4ZM9 1L15 8L9 15Z" fill="#333" /></svg>
			<svg class="copy-a" width="18" height="22" viewBox="0 0 18 22">
				<path d="M1 1H9V14H1Z" fill="#5b84b5" />
				<path d="M5 7H17V21H5Z" fill="#fff" stroke="#333" />
				<path d="M12 1V7M9 4H15" stroke="#3aa655" stroke-width="2" />
			</svg>
			<svg class="copy-b" width="18" height="22" viewBox="0 0 18 22">
				<path d="M1 1H11V14H1Z" fill="#d5dbe3" stroke="#aab" />
				<path d="M5 7H17V21H5Z" fill="#fff" stroke="#bbb" />
				<path d="M7 15H13" stroke="#9c9" stroke-width="2" />
			</svg>
			<div class="views">
				<div class="vw">
					<svg width="16" height="20" viewBox="0 0 16 20"><path d="M2.500 2.500H13.500V17.500H2.500ZM5 6H11M5 9H11M5 12H11M5 15H11" fill="none" stroke="#888" /></svg>
				</div>
				<div class="vw">
					<svg width="16" height="20" viewBox="0 0 16 20"><path d="M2.500 0.500V10.500H13.500V0.500M2.500 19.500V13.500H13.500V19.500M5 4H11M5 7H11M5 16H11" fill="none" stroke="#888" /></svg>
				</div>
				<div class="vw vw-on">
					<svg width="18" height="20" viewBox="0 0 18 20"><path d="M1.500 2.500H8.500V17.500H1.500ZM10.500 2.500H16.500V17.500H10.500ZM3 6H7M3 10H7M12 6H15M12 10H15" fill="none" stroke="#888" /></svg>
				</div>
				<div class="vw">
					<svg width="18" height="20" viewBox="0 0 18 20"><path d="M1 3H17M1 10H17M9 1V19M4 6H14M4 14H14M3 17H15" fill="none" stroke="#888" /></svg>
				</div>
			</div>
			<span class="pct">100%</span>
			<i class="pct-arrow">▾</i>
			<svg width="16" height="22" viewBox="0 0 16 22"><ellipse cx="8" cy="11" rx="6.500" ry="8" fill="none" stroke="#555" /><path d="M5 11H11" stroke="#333" /></svg>
			<div class="slider"><div class="knob"></div></div>
			<svg width="16" height="22" viewBox="0 0 16 22"><ellipse cx="8" cy="11" rx="6.500" ry="8" fill="none" stroke="#555" /><path d="M5 11H11M8 7V15" stroke="#333" /></svg>
		</div>
	</div>
</template>

<style>
html, body { margin: 0; background: #fff; overflow: hidden; }
</style>

<style scoped>
.viewer {
	width: 2560px;
	height: 1326px;
	display: flex;
	flex-direction: column;
	background: #fff;
	font-family: "Liberation Sans", Arial, sans-serif;
	color: #222;
	overflow: hidden;
}
.viewport { flex: 1; display: flex; min-height: 0; }
.page { position: relative; width: 2540px; height: 1277px; overflow: hidden; }
.sheet { display: block; font-family: "Liberation Sans", Arial, sans-serif; }

.k { stroke: #1c1c1c; stroke-width: 2.5; }
.g { stroke: #777; stroke-width: 1.6; }
.t { stroke: #2a2a2a; stroke-width: 1; }
.p { stroke: #9c59a6; stroke-width: 2.5; }
.h { stroke: #8fadd6; stroke-width: 1.6; }
.f { stroke: #333; stroke-width: 1.6; }
.d { stroke: #333; stroke-width: 0.9; stroke-dasharray: 3.5 2; }
.gd { stroke: #333; stroke-width: 1; stroke-dasharray: 4 2.5; }
.kd { stroke: #222; stroke-width: 2.5; stroke-dasharray: 3.5 2; }
.ah { fill: #222; }
ellipse.ring { fill: #fff; stroke: #222; stroke-width: 1; }
ellipse.sw { fill: #fff; stroke: #222; stroke-width: 0.8; }
ellipse.de { fill: none; stroke: #333; stroke-width: 0.9; stroke-dasharray: 4 3; }

text { dominant-baseline: central; }
.wl { font-size: 9px; fill: #333; paint-order: stroke; stroke: #fff; stroke-width: 4px; }
.sm { font-size: 6.5px; fill: #333; }
.pin { font-size: 6.5px; fill: #333; }
.pn { font-size: 6.5px; fill: #333; letter-spacing: 0.3px; }
.nt { font-size: 7px; fill: #333; letter-spacing: 0.15px; }
.lk { font-size: 9px; fill: #2b8fc0; text-decoration: underline; }
.cn { font-size: 15px; font-weight: 700; fill: #1f8fbd; text-decoration: underline; }
.zone { font-size: 23px; font-weight: 700; fill: #222; }

.parts, .twist, .legend, .symbols, .abbrev {
	position: absolute;
	border-collapse: collapse;
	table-layout: fixed;
	background: #fff;
	text-align: center;
}
.parts td, .twist td, .legend td, .symbols td, .abbrev td {
	box-sizing: border-box;
	border: 1px solid #3a3a3a;
	padding: 0;
	line-height: 1;
	overflow: hidden;
	white-space: nowrap;
}
.parts { width: 462px; font-size: 7px; letter-spacing: 0.3px; color: #333; }
.parts td { height: 12.2px; }
.c1 { width: 35px; }
.c2 { width: 58px; }
.c3 { width: 36px; }
.c4 { width: 35px; }
.c5 { width: 205px; }
.p-harness { left: 1448px; top: 411px; }
.p-cable { left: 1448px; top: 801px; }

.twist { left: 1926px; top: 580px; width: 120px; font-size: 5.6px; color: #333; }
.twist td { height: 11.7px; }
.twist .tw-title td { height: 30px; line-height: 9.5px; }
.tw-b { font-weight: 700; }

.legend { left: 708px; top: 879px; width: 469px; color: #333; }
.legend td { height: 15.4px; }
.legend .lg-title td { height: 32.500px; font-size: 16.800px; font-weight: 700; color: #222; }
.lg-c1 { width: 106px; }
.legend .lg-txt { text-align: left; padding-left: 14px; font-size: 10px; }
.swatch { width: 81px; height: 8px; margin: 0 auto; }
.sw-a { background: #231f20; }
.sw-b { background: #ee3a37; }
.sw-c { background: #0d8bc9; }
.sw-d { background: #f8931f; }
.sw-e { background: #f48ba3; }
.sw-f { background: #9c59a6; }
.sw-g { background: #6fc3a0; }
.sw-h { background: #fbc4d5; }
.sw-i { background: #c4a90c; }
.sw-j { background: #e6bd98; }
.sw-k { background: repeating-linear-gradient(120deg, #231f20 0 3px, #6fc3a0 3px 9px); }
.sw-l { background: repeating-linear-gradient(120deg, #231f20 0 3px, #fbc4d5 3px 9px); }
.sw-m { background: repeating-linear-gradient(120deg, #231f20 0 3px, #c9b0d4 3px 9px); }
.sw-n { background: #8fadd6; }

.callout {
	position: absolute;
	left: 2073px;
	top: 439px;
	width: 361px;
	height: 68px;
	border: 1px solid #333;
}
.co-title {
	height: 21px;
	border-bottom: 1px solid #333;
	font-size: 11.700px;
	font-weight: 700;
	line-height: 21px;
	text-align: center;
}
.co-body { display: block; font-family: "Liberation Sans", Arial, sans-serif; }
.co-a { font-size: 11.5px; fill: #333; }
.co-s { font-size: 7px; fill: #333; }
.co-link { font-size: 12.500px; fill: #2b8fc0; text-decoration: underline; }
.co-num { font-size: 12.500px; fill: #333; }

.symbols { left: 2073px; top: 517px; width: 229px; color: #333; }
.sy-c1 { width: 58px; }
.symbols .sy-head td { height: 24px; font-size: 12px; font-weight: 700; color: #222; }
.sy-row td { height: 24.4px; }
.sy-icon svg { display: block; margin: 0 auto; }
.sy-icon b { font-size: 8px; }
.symbols .sy-txt { text-align: left; padding-left: 9px; font-size: 8.5px; line-height: 12px; }

.abbrev { left: 2308px; top: 517px; width: 127px; font-size: 8.5px; color: #333; }
.ab-c1 { width: 67px; }
.abbrev .ab-head td { height: 25px; font-size: 12px; font-weight: 700; color: #222; }
.ab-row td { height: 20px; }

.warning {
	position: absolute;
	left: 1230px;
	top: 1077px;
	width: 312px;
	height: 123px;
	border-bottom: 2px solid #222;
}
.wn-head {
	height: 33px;
	background: #222;
	color: #fff;
	display: flex;
	align-items: center;
	justify-content: center;
	gap: 4px;
	font-size: 19px;
	font-weight: 700;
}
.wn-body { margin-top: 4px; font-size: 11px; font-weight: 700; line-height: 14.2px; white-space: nowrap; }
.wn-just { text-align: justify; text-align-last: justify; white-space: normal; }

.title-block {
	position: absolute;
	left: 1555px;
	top: 1026px;
	width: 899px;
	height: 177px;
	box-sizing: border-box;
	padding: 3px 0 0 6px;
	background: #e4e4e6;
	border-top: 2px solid #333;
	border-left: 1px solid #333;
	white-space: nowrap;
	color: #222;
}
.tb-b { font-size: 18.500px; font-weight: 700; line-height: 26px; }
.tb-r { font-size: 18.500px; line-height: 26.500px; }
.tb-s { font-size: 13.350px; line-height: 16px; }
.tb-r + .tb-s { margin-top: -3px; }

.vbar { flex: 1; position: relative; background: #f0f0f0; }
.v-top { height: 8px; background: #f6f6f6; border: 1px solid #999; border-top: 0; margin: 0 1px; }
.v-up { display: block; margin: 8px 0 0 4px; }
.v-thumb { height: 45px; margin-top: 513px; background: #cdcdcd; }

.hbar { height: 17px; display: flex; align-items: center; background: #f0f0f0; }
.h-stub { width: 9px; height: 17px; background: #dcdcdc; border-right: 1px solid #888; }
.h-left { margin-left: 6px; }
.h-thumb { width: 553px; height: 17px; margin-left: 861px; background: #cdcdcd; }
.h-right { margin-left: 1088px; }
.h-down { margin-left: 8px; }

.toolbar { height: 32px; display: flex; align-items: center; background: #f0f0f0; font-size: 13px; color: #333; }
.nav-first { margin-left: 1028px; }
.nav-prev { margin-left: 13px; }
.page-box {
	width: 142px;
	height: 23px;
	margin-left: 13px;
	box-sizing: border-box;
	display: flex;
	align-items: center;
	justify-content: space-between;
	padding: 0 5px 0 4px;
	background: #fff;
	border: 1px solid #c4c4c4;
}
.page-box i { font-style: normal; font-size: 10px; }
.nav-next { margin-left: 8px; }
.nav-last { margin-left: 10px; }
.copy-a { margin-left: 18px; }
.copy-b { margin-left: 11px; }
.views { display: flex; margin-left: 801px; }
.vw { width: 30px; height: 24px; display: flex; align-items: center; justify-content: center; }
.vw-on { background: #c5d7ec; }
.pct { margin-left: 30px; }
.pct-arrow { margin-left: 37px; font-style: normal; font-size: 10px; }
.slider { position: relative; width: 113px; height: 2px; margin: 0 9px 0 10px; background: #333; }
.knob { position: absolute; left: 55px; top: -7px; width: 5px; height: 16px; background: #333; }
</style>
